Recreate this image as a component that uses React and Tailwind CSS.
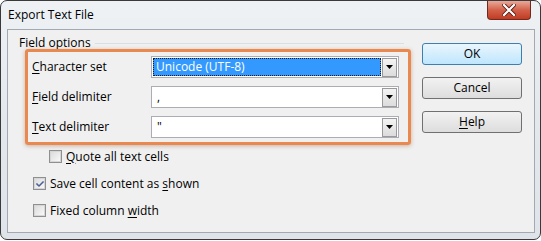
import { FaCheck } from 'react-icons/fa';

const U = ({ children }) => <span className="underline underline-offset-[2px]">{children}</span>;

const Combo = ({ value, selected }) => (
  <div className="flex h-[22px] w-[248px] items-center border border-[#abadb3] bg-white pl-[1px] pr-[1px]">
    {selected ? (
      <div className="flex h-[18px] flex-1 items-center border border-dotted border-[#1a1a1a] bg-[#3399ff] pl-[2px] text-white">
        {value}
      </div>
    ) : (
      <div className="flex h-[18px] flex-1 items-center pl-[4px] text-black">{value}</div>
    )}
    <div className="ml-[1px] flex h-[19px] w-[15px] items-center justify-center border border-[#9a9a9a] bg-gradient-to-b from-[#f4f4f4] to-[#dcdcdc]">
      <svg width="7" height="4" viewBox="0 0 7 4">
        <path d="M0 0h7L3.5 4z" fill="#000" />
      </svg>
    </div>
  </div>
);

const Checkbox = ({ checked }) => (
  <div className="flex h-[13px] w-[13px] items-center justify-center border border-[#8e8f8f] bg-white">
    <div className="flex h-[11px] w-[11px] items-center justify-center border border-[#d6d6d6] bg-gradient-to-br from-[#dcdcdc] to-[#f8f8f8]">
      {checked && <FaCheck className="text-[#4a5f97]" size={8} />}
    </div>
  </div>
);

const Button = ({ children, primary }) => (
  <button
    className={
      primary
        ? 'h-[22px] w-[100px] rounded-[3px] border border-[#3c7fb1] bg-gradient-to-b from-[#eaf6fd] to-[#bee6fd] text-black'
        : 'h-[22px] w-[100px] rounded-[3px] border border-[#707070] bg-gradient-to-b from-[#f2f2f2] to-[#dddddd] text-black'
    }
  >
    {children}
  </button>
);

export default function App() {
  return (
    <div className="h-[241px] w-[541px] bg-white font-['Segoe_UI','Open_Sans',sans-serif] text-[12px] text-black">
      <div className="h-[240px] w-[541px] rounded-[7px] border border-[#3a3a3a] bg-gradient-to-b from-[#eef2f5] via-[#e3e8ed] to-[#dfe4ea]">
        <div className="flex h-[28px] items-start justify-between">
          <div className="pl-[7px] pt-[6px] leading-[16px]">Export Text File</div>
          <div className="mr-[9px] flex h-[19px] w-[44px] items-center justify-center rounded-b-[4px] border border-t-0 border-[#6e2a1e] bg-gradient-to-b from-[#e9a899] via-[#d2614a] to-[#c13a22]">
            <svg width="14" height="12" viewBox="0 0 14 12">
              <path d="M2 1l10 10M12 1L2 11" stroke="#5a1c12" strokeWidth="4" strokeLinecap="square" />
              <path d="M2 1l10 10M12 1L2 11" stroke="#fff" strokeWidth="2.2" strokeLinecap="square" />
            </svg>
          </div>
        </div>
        <div className="ml-[6px] flex h-[204px] w-[528px] border border-[#a2a9b1] bg-[#f0f0f0]">
          <div className="flex w-[405px] flex-col pl-[11px] pt-[7px]">
            <div className="flex h-[12px] items-center leading-[12px]">
              <span>Field options</span>
              <div className="ml-[4px] mr-[9px] h-px flex-1 bg-[#d5dfe5]" />
            </div>
            <div className="ml-[6px] w-[386px] rounded-[3px] border-[3px] border-[#e9894f] px-[4px] py-[4px] shadow-[0_1px_4px_rgba(120,60,20,0.35)]">
              <div className="flex flex-col gap-[8px]">
                <div className="flex h-[22px] items-center">
                  <div className="w-[119px]"><U>C</U>haracter set</div>
                  <Combo value="Unicode (UTF-8)" selected />
                </div>
                <div className="flex h-[22px] items-center">
                  <div className="w-[119px]"><U>F</U>ield delimiter</div>
                  <Combo value="," />
                </div>
                <div className="flex h-[22px] items-center">
                  <div className="w-[119px]"><U>T</U>ext delimiter</div>
                  <Combo value={'"'} />
                </div>
              </div>
            </div>
            <div className="mt-[5px] flex flex-col gap-[14px]">
              <div className="flex h-[13px] items-center gap-[4px] pl-[30px]">
                <Checkbox />
                <span><U>Q</U>uote all text cells</span>
              </div>
              <div className="flex h-[13px] items-center gap-[4px] pl-[14px]">
                <Checkbox checked />
                <span>Save cell content as <U>s</U>hown</span>
              </div>
              <div className="flex h-[13px] items-center gap-[4px] pl-[14px]">
                <Checkbox />
                <span>Fixed column <U>w</U>idth</span>
              </div>
            </div>
          </div>
          <div className="ml-[9px] flex flex-col gap-[12px] pt-[13px]">
            <Button primary>OK</Button>
            <Button>Cancel</Button>
            <Button><U>H</U>elp</Button>
          </div>
        </div>
      </div>
    </div>
  );
}
